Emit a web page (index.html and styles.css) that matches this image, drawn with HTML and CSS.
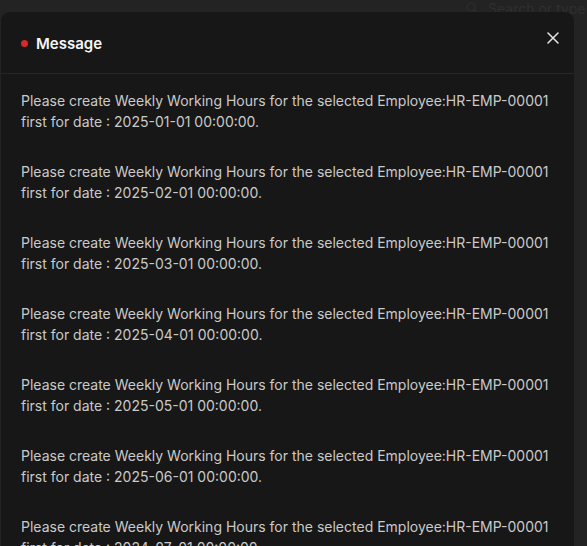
FILE: index.html
```html
<!DOCTYPE html>
<html>
<head>
<meta charset="utf-8">
<link rel="stylesheet" href="styles.css">
</head>
<body>
<div class="navbar">
  <div class="search">
    <svg class="search-icon" width="12" height="12" viewBox="0 0 12 12"><circle cx="5" cy="5" r="4" fill="none" stroke="currentColor" stroke-width="1.2"/><path d="M8 8l3 3" stroke="currentColor" stroke-width="1.2"/></svg>
    <span>Search or type</span>
  </div>
</div>
<div class="modal">
  <div class="modal-header">
    <div class="title"><span class="dot"></span>Message</div>
    <svg class="close" width="12" height="12" viewBox="0 0 12 12"><path d="M1 1L11 11M11 1L1 11" stroke="#e6e6e6" stroke-width="1.5" stroke-linecap="round"/></svg>
  </div>
  <div class="modal-body">
    <p class="msg">Please create Weekly Working Hours for the selected Employee:HR-EMP-00001 first for date : 2025-01-01 00:00:00.</p>
    <p class="msg">Please create Weekly Working Hours for the selected Employee:HR-EMP-00001 first for date : 2025-02-01 00:00:00.</p>
    <p class="msg">Please create Weekly Working Hours for the selected Employee:HR-EMP-00001 first for date : 2025-03-01 00:00:00.</p>
    <p class="msg">Please create Weekly Working Hours for the selected Employee:HR-EMP-00001 first for date : 2025-04-01 00:00:00.</p>
    <p class="msg">Please create Weekly Working Hours for the selected Employee:HR-EMP-00001 first for date : 2025-05-01 00:00:00.</p>
    <p class="msg">Please create Weekly Working Hours for the selected Employee:HR-EMP-00001 first for date : 2025-06-01 00:00:00.</p>
    <p class="msg">Please create Weekly Working Hours for the selected Employee:HR-EMP-00001 first for date : 2024-07-01 00:00:00.</p>
  </div>
</div>
</body>
</html>
```
FILE: styles.css
```css
html, body {
  margin: 0;
  padding: 0;
  height: 100%;
  overflow: hidden;
}
body {
  background: #232323;
  font-family: Inter, "Noto Sans", sans-serif;
}
.navbar {
  height: 12px;
  display: flex;
  justify-content: flex-end;
}
.search {
  display: flex;
  align-items: center;
  gap: 10px;
  color: #2f2f2f;
  font-size: 14px;
  margin-top: -3px;
  height: 22px;
  white-space: nowrap;
  width: 121px;
}
.search-icon {
  flex: none;
}
.modal {
  position: absolute;
  top: 12px;
  left: 1px;
  width: 573px;
  background: #171717;
  border-radius: 9px 9px 0 0;
}
.modal-header {
  height: 62px;
  border-bottom: 1px solid #272727;
  display: flex;
  align-items: center;
  justify-content: space-between;
  padding: 0 15px 0 20px;
  box-sizing: border-box;
}
.title {
  display: flex;
  align-items: center;
  gap: 8px;
  color: #f5f5f5;
  font-size: 15px;
  font-weight: 600;
  margin-top: 1px;
}
.dot {
  width: 7px;
  height: 7px;
  border-radius: 50%;
  background: #d62a2a;
}
.close {
  margin-top: -10px;
}
.modal-body {
  padding: 16px 20px 0 20px;
  display: flex;
  flex-direction: column;
  gap: 29px;
}
.msg {
  margin: 0;
  color: #cacaca;
  font-size: 14px;
  line-height: 21px;
}
```
